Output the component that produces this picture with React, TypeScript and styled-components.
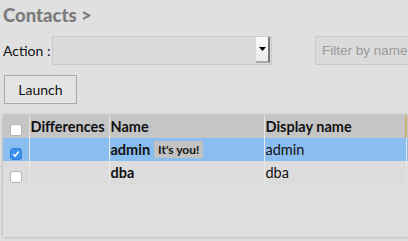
import React from 'react';
import styled, { createGlobalStyle } from 'styled-components';

const GlobalStyle = createGlobalStyle`
  html, body {
    margin: 0;
    padding: 0;
    background: #e0e0e0;
    overflow: hidden;
  }
  body {
    font-family: Lato, "Open Sans", sans-serif;
    color: #111;
  }
`;

const ROWS = [
  { name: 'admin', display: 'admin', me: true },
  { name: 'dba', display: 'dba', me: false },
];

function Checkbox({ checked }: { checked?: boolean }) {
  return (
    <Box checked={checked}>
      {checked && (
        <svg width="8" height="8" viewBox="0 0 8 8">
          <path d="M1.2 4.3 L3.1 6.1 L6.8 1.6" fill="none" stroke="#fff" strokeWidth="1.5" />
        </svg>
      )}
    </Box>
  );
}

export default function App() {
  return (
    <Page>
      <GlobalStyle />
      <Title>Contacts &gt;</Title>
      <Toolbar>
        <Label>Action :</Label>
        <Select>
          <Arrow>
            <svg width="7" height="4" viewBox="0 0 7 4">
              <path d="M0 0 H7 L3.5 4 Z" fill="#000" />
            </svg>
          </Arrow>
        </Select>
        <Filter placeholder="Filter by name" />
      </Toolbar>
      <Launch>Launch</Launch>
      <Panel>
        <Table>
          <colgroup>
            <col style={{ width: 26 }} />
            <col style={{ width: 80 }} />
            <col style={{ width: 155 }} />
            <col style={{ width: 142 }} />
            <col style={{ width: 40 }} />
          </colgroup>
          <thead>
            <tr>
              <Th>
                <Checkbox />
              </Th>
              <Th>Differences</Th>
              <Th>Name</Th>
              <Th>Display name</Th>
              <Th last />
            </tr>
          </thead>
          <tbody>
            {ROWS.map((r) => (
              <Row key={r.name} selected={r.me}>
                <Td>
                  <Checkbox checked={r.me} />
                </Td>
                <Td />
                <Td>
                  <Strong>{r.name}</Strong>
                  {r.me && <Badge>It's you!</Badge>}
                </Td>
                <Td>{r.display}</Td>
                <Td />
              </Row>
            ))}
          </tbody>
        </Table>
      </Panel>
    </Page>
  );
}

const Page = styled.div`
  width: 408px;
  height: 241px;
  padding-left: 3px;
  box-sizing: border-box;
  overflow: hidden;
`;

const Title = styled.h1`
  margin: 0;
  padding-top: 4px;
  height: 31px;
  box-sizing: border-box;
  font-size: 18.5px;
  font-weight: 900;
  color: #7b7b7b;
`;

const Toolbar = styled.div`
  display: flex;
  align-items: center;
  height: 30px;
  margin-top: 4px;
  white-space: nowrap;
`;

const Label = styled.span`
  font-size: 14px;
  width: 49px;
  flex: none;
`;

const Select = styled.div`
  width: 220px;
  height: 29px;
  flex: none;
  box-sizing: border-box;
  border: 1px solid #cacaca;
  background: #dbdbdb;
  display: flex;
  justify-content: flex-end;
  align-items: center;
`;

const Arrow = styled.div`
  width: 14px;
  height: 26px;
  margin-right: 1px;
  box-sizing: border-box;
  background: linear-gradient(#fafafa, #ececec);
  border-right: 2px solid #777;
  border-bottom: 2px solid #aaa;
  display: flex;
  align-items: center;
  justify-content: center;
`;

const Filter = styled.input`
  margin-left: 43px;
  width: 120px;
  height: 29px;
  flex: none;
  box-sizing: border-box;
  border: 1px solid #cacaca;
  background: #dbdbdb;
  padding: 0 6px;
  font-family: "Liberation Sans", Arial, sans-serif;
  font-size: 13.5px;
  outline: none;
  &::placeholder {
    color: #9a9a9a;
  }
`;

const Launch = styled.button`
  display: block;
  margin: 10px 0 0 1px;
  width: 73px;
  height: 29px;
  box-sizing: border-box;
  border: 1px solid #a9a9a9;
  background: #e4e4e4;
  font-family: Lato, sans-serif;
  font-size: 14px;
  color: #111;
  padding: 0;
`;

const Panel = styled.div`
  margin-top: 11px;
  height: 122px;
  background: #dfdfdf;
  box-shadow: 0 0 3px rgba(0, 0, 0, 0.28);
  overflow: hidden;
`;

const Table = styled.table`
  border-collapse: collapse;
  table-layout: fixed;
  width: 443px;
  font-size: 14.5px;
`;

const Th = styled.th<{ last?: boolean }>`
  height: 23px;
  padding: 0 0 0 1px;
  text-align: left;
  vertical-align: middle;
  font-weight: 700;
  background: #c5c5c5;
  border-left: 1px solid #e6e6e6;
  white-space: nowrap;
  overflow: hidden;
  box-sizing: border-box;
  &:first-child {
    border-left: none;
    padding: 6px 0 0 7px;
  }
  ${({ last }) => (last ? 'border-left: 2px solid #c9b27a;' : '')}
`;

const Row = styled.tr<{ selected?: boolean }>`
  background: ${({ selected }) => (selected ? '#8bbef0' : '#dcdcdc')};
`;

const Td = styled.td`
  height: 23px;
  padding: 0 0 0 1px;
  vertical-align: middle;
  border-left: 1px solid #e6e6e6;
  white-space: nowrap;
  overflow: hidden;
  box-sizing: border-box;
  &:first-child {
    border-left: none;
    padding: 8px 0 0 7px;
  }
`;

const Strong = styled.b`
  font-weight: 700;
`;

const Badge = styled.span`
  display: inline-block;
  margin-left: 4px;
  padding: 1px 4px;
  background: #c2c2c2;
  font-size: 12px;
  font-weight: 700;
  line-height: 15px;
  vertical-align: 1px;
`;

const Box = styled.span<{ checked?: boolean }>`
  display: flex;
  align-items: center;
  justify-content: center;
  width: 12px;
  height: 12px;
  box-sizing: border-box;
  border-radius: 3px;
  background: ${({ checked }) => (checked ? '#3a8ff0' : '#ffffff')};
  border: 1px solid ${({ checked }) => (checked ? '#2f7ed8' : '#b5b5b5')};
`;
